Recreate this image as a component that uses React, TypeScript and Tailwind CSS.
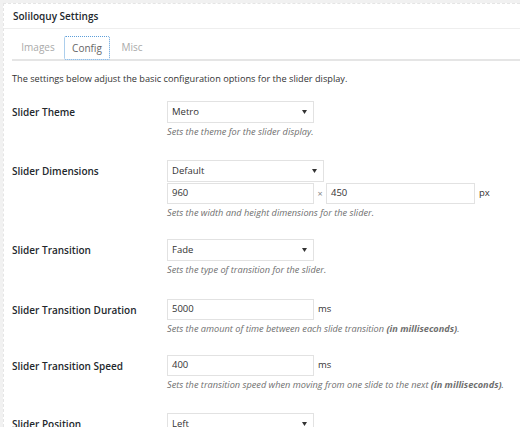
import type { ReactNode } from "react"

const FONT = { fontFamily: '"Open Sans", "Noto Sans", sans-serif' }

function Caret() {
	return (
		<svg width="5" height="4" viewBox="0 0 5 4" className="shrink-0">
			<path d="M0 0h5L2.5 4z" fill="#333" />
		</svg>
	)
}

function Select({ value, width }: { value: string; width: string }) {
	return (
		<div
			className={`flex h-[22px] items-center justify-between border border-[#e2e2e2] bg-white pl-[4px] pr-[6px] text-[9.5px] text-[#333] ${width}`}
		>
			<span>{value}</span>
			<Caret />
		</div>
	)
}

function Input({ value, width }: { value: string; width: string }) {
	return (
		<div
			className={`flex h-[21px] items-center border border-[#e2e2e2] bg-white pl-[4px] text-[9.5px] text-[#333] ${width}`}
		>
			{value}
		</div>
	)
}

function Help({ children }: { children: ReactNode }) {
	return <p className="mt-[3px] text-[9.2px] leading-[12px] italic text-[#6f6f6f]">{children}</p>
}

function Row({ label, children, pb = "pb-[22px]" }: { label: string; children: ReactNode; pb?: string }) {
	return (
		<div className={`grid grid-cols-[155px_1fr] ${pb}`}>
			<div className="flex h-[22px] items-center text-[10px] font-semibold text-[#23282d]">{label}</div>
			<div>{children}</div>
		</div>
	)
}

export default function App() {
	return (
		<div className="h-[427px] w-[520px] overflow-hidden bg-[#f1f1f1] pt-[3px] pl-[3px]" style={FONT}>
			<div className="h-full border-t border-l border-dashed border-[#e5e5e5] bg-white">
				{/* 标题栏 */}
				<div className="flex h-[25px] items-center border-b border-[#eeeeee] pl-[9px] text-[10px] font-semibold text-[#23282d]">
					Soliloquy Settings
				</div>

				{/* 选项卡 */}
				<div className="ml-[8px] mt-[7px] flex items-end border-b-2 border-[#e5e5e5] text-[10px]">
					<div className="flex h-[23px] w-[52px] items-center justify-center text-[#aaa]">Images</div>
					<div className="-mb-[1px] flex h-[24px] w-[46px] items-center justify-center rounded-[2px] border border-dotted border-[#5b9dd9] bg-white text-[#666]">
						Config
					</div>
					<div className="flex h-[23px] w-[44px] items-center justify-center text-[#aaa]">Misc</div>
				</div>

				<div className="pl-[8px]">
					<p className="mt-[12px] text-[9.2px] leading-[12px] text-[#333]">
						The settings below adjust the basic configuration options for the slider display.
					</p>

					<div className="mt-[16px]">
						<Row label="Slider Theme" pb="pb-[22px]">
							<Select value="Metro" width="w-[147px]" />
							<Help>Sets the theme for the slider display.</Help>
						</Row>

						<Row label="Slider Dimensions" pb="pb-[20px]">
							<Select value="Default" width="w-[157px]" />
							<div className="mt-[1px] flex items-center">
								<Input value="960" width="w-[147px]" />
								<span className="w-[12px] text-center text-[9px] text-[#888]">×</span>
								<Input value="450" width="w-[149px]" />
								<span className="ml-[4px] text-[9.5px] text-[#333]">px</span>
							</div>
							<Help>Sets the width and height dimensions for the slider.</Help>
						</Row>

						<Row label="Slider Transition" pb="pb-[23px]">
							<Select value="Fade" width="w-[147px]" />
							<Help>Sets the type of transition for the slider.</Help>
						</Row>

						<Row label="Slider Transition Duration" pb="pb-[20px]">
							<div className="flex items-center">
								<Input value="5000" width="w-[147px]" />
								<span className="ml-[4px] text-[9.5px] text-[#333]">ms</span>
							</div>
							<Help>
								Sets the amount of time between each slide transition{" "}
								<span className="font-bold">(in milliseconds)</span>.
							</Help>
						</Row>

						<Row label="Slider Transition Speed" pb="pb-[22px]">
							<div className="flex items-center">
								<Input value="400" width="w-[147px]" />
								<span className="ml-[4px] text-[9.5px] text-[#333]">ms</span>
							</div>
							<Help>
								Sets the transition speed when moving from one slide to the next{" "}
								<span className="font-bold">(in milliseconds)</span>.
							</Help>
						</Row>

						<Row label="Slider Position">
							<Select value="Left" width="w-[147px]" />
						</Row>
					</div>
				</div>
			</div>
		</div>
	)
}
